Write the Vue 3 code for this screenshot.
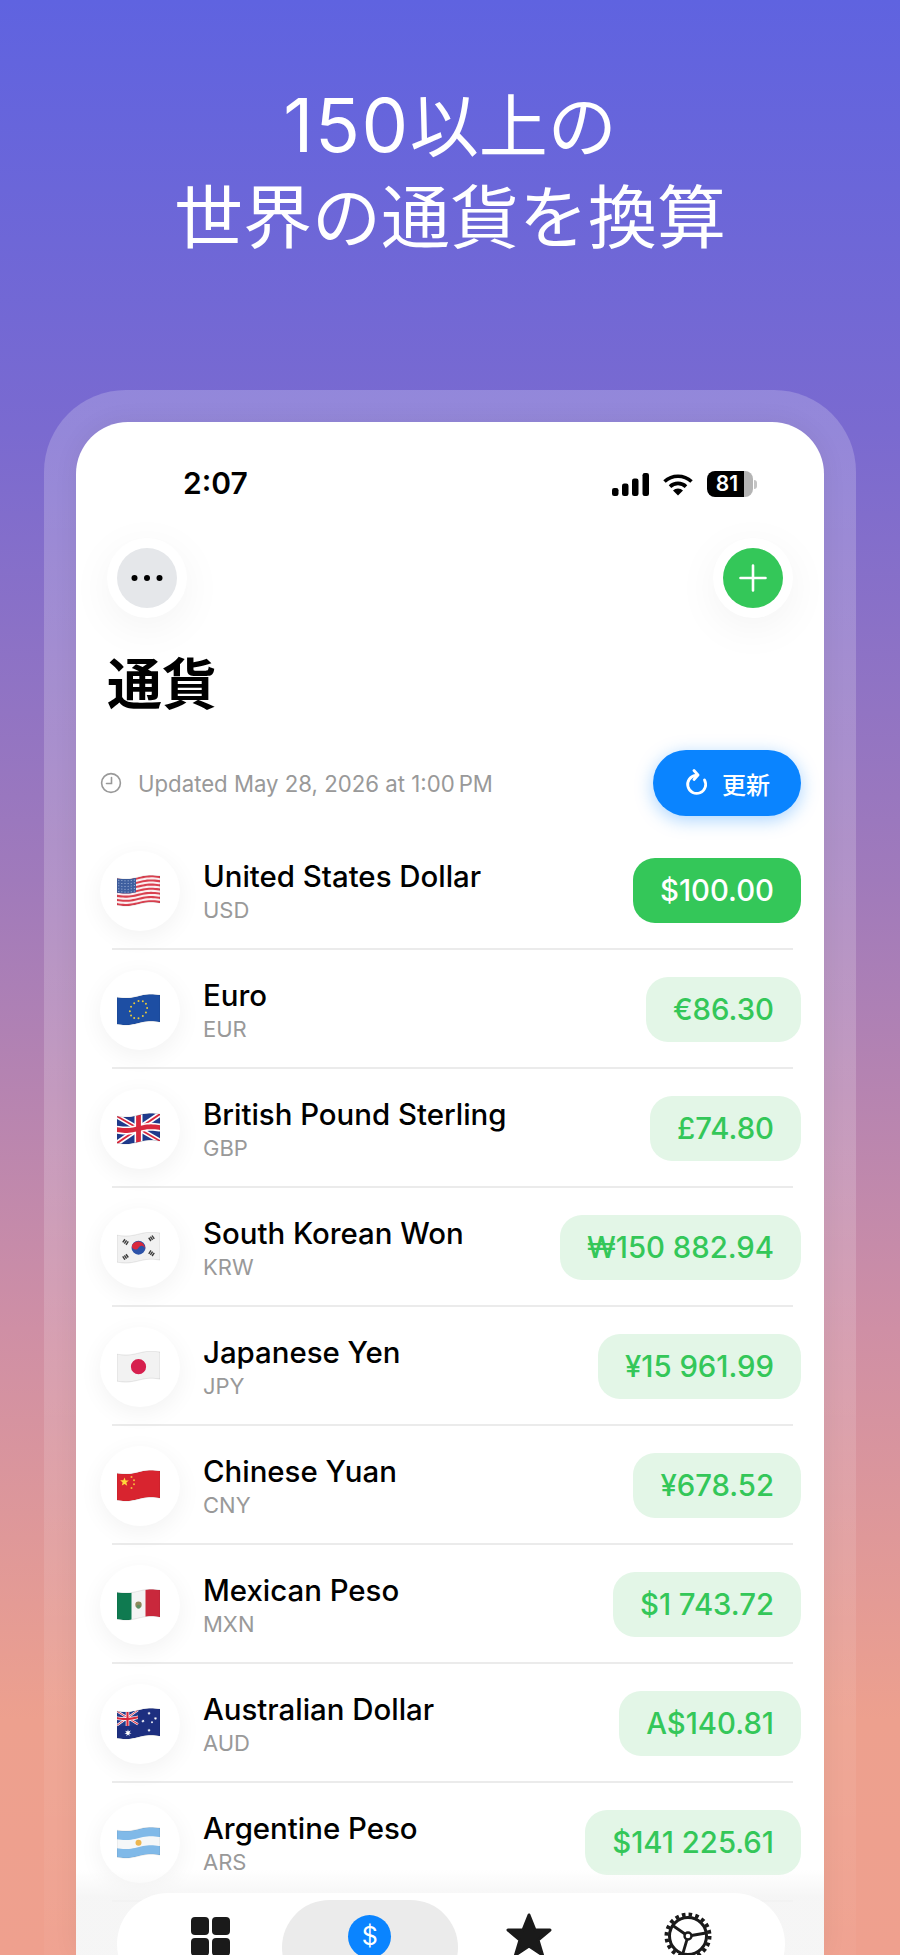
<template>
  <div class="page">
    <h2 class="headline"><span class="num">150</span>以上の<br />世界の通貨を換算</h2>

    <div class="bezel">
      <div class="screen">
        <div class="status">
          <span class="time">2:07</span>
          <div class="status-icons">
            <svg width="37" height="23" viewBox="0 0 37 23" fill="#000">
              <rect x="0" y="15" width="6.5" height="8" rx="2.2" />
              <rect x="10" y="10.5" width="6.5" height="12.5" rx="2.2" />
              <rect x="20" y="5.5" width="6.5" height="17.5" rx="2.2" />
              <rect x="30.5" y="0" width="6.5" height="23" rx="2.2" />
            </svg>
            <svg width="32" height="23" viewBox="0 0 32 23" fill="none" stroke="#000" stroke-width="3.6">
              <path d="M2.5 8.5A20 20 0 0 1 29.5 8.5" />
              <path d="M8 13.6A11.5 11.5 0 0 1 24 13.6" />
              <path d="M16 22.5L11 17.5A7 7 0 0 1 21 17.5Z" fill="#000" stroke="none" />
            </svg>
            <div class="battery">
              <div class="battery-body">81</div>
              <div class="battery-nub"></div>
            </div>
          </div>
        </div>

        <div class="nav">
          <div class="round-btn">
            <div class="round-inner grey">
              <svg width="34" height="8" viewBox="0 0 34 8" fill="#000">
                <circle cx="4.5" cy="4" r="3" />
                <circle cx="17" cy="4" r="3" />
                <circle cx="29.5" cy="4" r="3" />
              </svg>
            </div>
          </div>
          <div class="round-btn">
            <div class="round-inner green">
              <svg width="28" height="28" viewBox="0 0 28 28" stroke="#fff" stroke-width="2.6" stroke-linecap="round">
                <path d="M14 1.5V26.5M1.5 14H26.5" />
              </svg>
            </div>
          </div>
        </div>

        <h1 class="title">通貨</h1>

        <div class="updated">
          <div class="updated-text">
            <svg width="22" height="22" viewBox="0 0 22 22" fill="none" stroke="#999" stroke-width="1.6" stroke-linecap="round">
              <circle cx="11" cy="11" r="9.4" />
              <path d="M11.5 5.5V11.5H6.5" />
            </svg>
            <span>Updated May 28, 2026 at 1:00&#8201;PM</span>
          </div>
          <button class="refresh">
            <svg width="26" height="28" viewBox="0 0 26 28" fill="none" stroke="#fff" stroke-width="2.8" stroke-linecap="round" stroke-linejoin="round">
              <path d="M11.5 6.5A9 9 0 1 0 20.5 11" />
              <path d="M10 1.5L14 6L10 10.5" />
            </svg>
            <span>更新</span>
          </button>
        </div>

        <div class="list">
          <template v-for="(c, i) in currencies" :key="c.code">
            <div class="row">
              <div class="avatar">
                <svg class="flag" width="43" height="32" viewBox="0 0 43 32">
                  <defs>
                    <clipPath :id="'flag-' + c.code"><path :d="outline" /></clipPath>
                  </defs>
                  <g :clip-path="`url(#flag-${c.code})`">
                    <path v-for="(s, k) in c.shapes" :key="k" :d="s.d" :fill="s.fill" />
                  </g>
                  <path :d="outline" fill="none" stroke="rgba(0,0,0,.18)" stroke-width=".5" />
                </svg>
              </div>
              <div class="names">
                <div class="name">{{ c.name }}</div>
                <div class="code">{{ c.code }}</div>
              </div>
              <div class="amount" :class="{ base: i === 0 }">{{ c.amount }}</div>
            </div>
            <div class="sep"></div>
          </template>
        </div>

        <div class="fade"></div>

        <div class="tabbar">
          <div class="tab">
            <div class="grid-icon"><i></i><i></i><i></i><i></i></div>
          </div>
          <div class="tab active">
            <div class="dollar">$</div>
          </div>
          <div class="tab">
            <svg class="star" width="48" height="46" viewBox="0 0 48 46">
              <path
                d="M24 3L30 18H45L33 28L37.5 43L24 34L10.5 43L15 28L3 18H18Z"
                fill="#1a1a1a"
                stroke="#1a1a1a"
                stroke-width="3"
                stroke-linejoin="round"
              />
            </svg>
          </div>
          <div class="tab">
            <svg class="gear" width="48" height="48" viewBox="0 0 48 48" fill="none" stroke="#1a1a1a">
              <circle cx="24" cy="24" r="21.5" stroke-width="4" stroke-dasharray="3.6 3.15" />
              <circle cx="24" cy="24" r="18.5" stroke-width="3" />
              <circle cx="24" cy="24" r="3.5" stroke-width="2.4" />
              <path d="M21 22L8 13M27.4 23.5L42 21M23 27.5L19 41" stroke-width="2.8" />
            </svg>
          </div>
        </div>
      </div>
    </div>
  </div>
</template>

<script setup>
// flags are drawn flat and bent along the same wave as the emoji ones
const W = 43
const H = 27
const bend = (x) => -0.05 * x + 1.3 * Math.sin((x / W) * 2 * Math.PI) + 3.2

const pt = (x, y) => `${x.toFixed(2)} ${(y + bend(x)).toFixed(2)}`

function rect(x0, y0, x1, y1) {
  const xs = []
  for (let x = x0; x < x1; x += 2) xs.push(x)
  xs.push(x1)
  const top = xs.map((x) => pt(x, y0))
  const bottom = xs.reverse().map((x) => pt(x, y1))
  return 'M' + top.concat(bottom).join('L') + 'Z'
}

const poly = (pts) => 'M' + pts.map(([x, y]) => pt(x, y)).join('L') + 'Z'

function dot(cx, cy, r) {
  const y = cy + bend(cx)
  return `M${cx - r} ${y}a${r} ${r} 0 1 0 ${r * 2} 0a${r} ${r} 0 1 0 ${-r * 2} 0Z`
}

function star(cx, cy, r, n = 5) {
  const pts = []
  for (let i = 0; i < n * 2; i++) {
    const a = -Math.PI / 2 + (i * Math.PI) / n
    const q = i % 2 ? r * 0.42 : r
    pts.push([cx + q * Math.cos(a), cy + q * Math.sin(a)])
  }
  return poly(pts)
}

function line(x0, y0, x1, y1, w) {
  const len = Math.hypot(x1 - x0, y1 - y0)
  const nx = (-(y1 - y0) / len) * (w / 2)
  const ny = ((x1 - x0) / len) * (w / 2)
  return poly([
    [x0 + nx, y0 + ny],
    [x1 + nx, y1 + ny],
    [x1 - nx, y1 - ny],
    [x0 - nx, y0 - ny]
  ])
}

function union(x1, y1, k = 1) {
  const cx = x1 / 2
  const cy = y1 / 2
  return [
    { d: rect(0, 0, x1, y1), fill: '#1f3a8c' },
    { d: line(0, 0, x1, y1, 5 * k), fill: '#fff' },
    { d: line(x1, 0, 0, y1, 5 * k), fill: '#fff' },
    { d: line(0, 0, x1, y1, 1.8 * k), fill: '#d8283c' },
    { d: line(x1, 0, 0, y1, 1.8 * k), fill: '#d8283c' },
    { d: rect(cx - 4 * k, 0, cx + 4 * k, y1), fill: '#fff' },
    { d: rect(0, cy - 4 * k, x1, cy + 4 * k), fill: '#fff' },
    { d: rect(cx - 2.4 * k, 0, cx + 2.4 * k, y1), fill: '#d8283c' },
    { d: rect(0, cy - 2.4 * k, x1, cy + 2.4 * k), fill: '#d8283c' }
  ]
}

function usFlag() {
  const out = [{ d: rect(0, 0, W, H), fill: '#fbeef0' }]
  for (let i = 0; i < 13; i += 2) {
    out.push({ d: rect(0, (i * H) / 13, W, ((i + 1) * H) / 13), fill: '#d9404f' })
  }
  out.push({ d: rect(0, 0, 19, 14.5), fill: '#3f5f9f' })
  for (let r = 0; r < 5; r++) {
    for (let c = 0; c < 6; c++) {
      out.push({ d: dot(1.8 + c * 3.1, 1.8 + r * 2.8, 0.5), fill: '#c9d6ee' })
    }
  }
  return out
}

function euFlag() {
  const out = [{ d: rect(0, 0, W, H), fill: '#1d4ea3' }]
  for (let i = 0; i < 12; i++) {
    const a = (i * Math.PI) / 6
    out.push({ d: dot(21.5 + 8.6 * Math.cos(a), 13.5 + 8.6 * Math.sin(a), 1), fill: '#e8c93a' })
  }
  return out
}

function krFlag() {
  const y = 13.5 + bend(21.5)
  const out = [
    { d: rect(0, 0, W, H), fill: '#f1f1f1' },
    { d: dot(21.5, 13.5, 7), fill: '#2c52a8' },
    { d: `M15 ${y - 2.4}A7 7 0 0 1 28 ${y + 2.4}A3.5 3.5 0 0 0 21.5 ${y}A3.5 3.5 0 0 1 15 ${y - 2.4}Z`, fill: '#d8283c' }
  ]
  const corners = [
    [8.5, 6, 1],
    [34.5, 6, -1],
    [8.5, 21, -1],
    [34.5, 21, 1]
  ]
  corners.forEach(([cx, cy, s]) => {
    for (let k = -1; k <= 1; k++) {
      const ox = k * 2 * 0.83
      const oy = k * 2 * 0.55 * s
      out.push({
        d: line(cx + ox - 2 * 0.55 * s, cy + oy + 2 * 0.83, cx + ox + 2 * 0.55 * s, cy + oy - 2 * 0.83, 1.4),
        fill: '#3a3a3a'
      })
    }
  })
  return out
}

const jpFlag = () => [
  { d: rect(0, 0, W, H), fill: '#f2f2f2' },
  { d: dot(21.5, 13.5, 7.6), fill: '#d6204e' }
]

const cnFlag = () => [
  { d: rect(0, 0, W, H), fill: '#d8242f' },
  { d: star(7.5, 8, 4.6), fill: '#ffd83a' },
  { d: dot(14.5, 3.5, 1), fill: '#f6b73c' },
  { d: dot(17, 7, 1), fill: '#f6b73c' },
  { d: dot(17, 11, 1), fill: '#f6b73c' },
  { d: dot(14.5, 14.5, 1), fill: '#f6b73c' }
]

const mxFlag = () => [
  { d: rect(0, 0, W, H), fill: '#f4f4f4' },
  { d: rect(0, 0, 14.5, H), fill: '#0f7a50' },
  { d: rect(28.5, 0, W, H), fill: '#c9283c' },
  { d: dot(21.5, 13.5, 3.2), fill: '#8f8a5c' },
  { d: dot(21.5, 15.5, 2), fill: '#5e8f62' }
]

const auFlag = () => [
  { d: rect(0, 0, W, H), fill: '#1d2f80' },
  ...union(21, 14, 0.45),
  { d: star(11, 21, 3.6, 7), fill: '#fff' },
  { d: star(32, 5, 1.8, 7), fill: '#fff' },
  { d: star(26, 12, 1.8, 7), fill: '#fff' },
  { d: star(38.5, 10, 1.8, 7), fill: '#fff' },
  { d: star(32, 22, 1.8, 7), fill: '#fff' },
  { d: dot(35, 14, 0.9), fill: '#fff' }
]

const arFlag = () => [
  { d: rect(0, 0, W, H), fill: '#80b9e8' },
  { d: rect(0, 9, W, 18), fill: '#f5f7f8' },
  { d: dot(21.5, 13.5, 3), fill: '#edb64f' }
]

const outline = rect(0, 0, W, H)

const currencies = [
  { name: 'United States Dollar', code: 'USD', amount: '$100.00', shapes: usFlag() },
  { name: 'Euro', code: 'EUR', amount: '€86.30', shapes: euFlag() },
  { name: 'British Pound Sterling', code: 'GBP', amount: '£74.80', shapes: union(W, H) },
  { name: 'South Korean Won', code: 'KRW', amount: '₩150\u00a0882.94', shapes: krFlag() },
  { name: 'Japanese Yen', code: 'JPY', amount: '¥15\u00a0961.99', shapes: jpFlag() },
  { name: 'Chinese Yuan', code: 'CNY', amount: '¥678.52', shapes: cnFlag() },
  { name: 'Mexican Peso', code: 'MXN', amount: '$1\u00a0743.72', shapes: mxFlag() },
  { name: 'Australian Dollar', code: 'AUD', amount: 'A$140.81', shapes: auFlag() },
  { name: 'Argentine Peso', code: 'ARS', amount: '$141\u00a0225.61', shapes: arFlag() }
]
</script>

<style>
body {
  margin: 0;
}
</style>

<style scoped>
.page {
  width: 900px;
  height: 1955px;
  overflow: hidden;
  display: flex;
  flex-direction: column;
  background: linear-gradient(180deg, #5f63e0 0%, #7a6ad0 22%, #a07abb 45%, #cf8fa5 68%, #eda08e 88%, #efa08e 100%);
  font-family: Inter, "Noto Sans CJK JP", sans-serif;
}

.headline {
  margin: 0;
  padding-top: 82px;
  height: 390px;
  box-sizing: border-box;
  font-size: 69px;
  font-weight: 400;
  line-height: 91px;
  text-align: center;
  color: #fff;
}

.num {
  font-size: 74px;
  line-height: 1;
  letter-spacing: 1.5px;
}

.bezel {
  flex: 1;
  margin: 0 44px;
  padding: 32px 32px 0;
  border-radius: 82px 82px 0 0;
  background: linear-gradient(180deg, rgba(255, 255, 255, 0.2) 0%, rgba(255, 255, 255, 0.18) 50%, rgba(255, 255, 255, 0.03) 100%);
  display: flex;
}

.screen {
  flex: 1;
  position: relative;
  overflow: hidden;
  background: #fff;
  border-radius: 52px 52px 0 0;
  box-shadow: 0 0 26px rgba(0, 0, 0, 0.06);
}

.status {
  height: 116px;
  box-sizing: border-box;
  padding: 0 67px 0 107px;
  display: flex;
  align-items: flex-start;
  justify-content: space-between;
}

.time {
  margin-top: 42px;
  font-size: 30px;
  line-height: 38px;
  font-weight: 600;
  color: #000;
}

.status-icons {
  margin-top: 49px;
  display: flex;
  align-items: center;
  gap: 13px;
}

.battery {
  display: flex;
  align-items: center;
  gap: 1px;
}

.battery-body {
  width: 46px;
  height: 26px;
  border-radius: 8px;
  background: linear-gradient(90deg, #000 0 81%, #b4b4b4 81% 100%);
  color: #fff;
  font-size: 21px;
  font-weight: 600;
  line-height: 26px;
  text-align: center;
  padding-right: 6px;
  box-sizing: border-box;
}

.battery-nub {
  width: 3px;
  height: 9px;
  border-radius: 0 3px 3px 0;
  background: #c4c4c4;
}

.nav {
  display: flex;
  justify-content: space-between;
  padding: 0 31px;
}

.round-btn {
  width: 80px;
  height: 80px;
  border-radius: 50%;
  background: #fff;
  box-shadow: 0 10px 44px rgba(0, 0, 0, 0.05);
  display: flex;
  align-items: center;
  justify-content: center;
}

.round-inner {
  width: 60px;
  height: 60px;
  border-radius: 50%;
  display: flex;
  align-items: center;
  justify-content: center;
}

.round-inner.grey {
  background: #e5e7ea;
}

.round-inner.green {
  background: #34c759;
}

.title {
  margin: 30px 0 0;
  padding-left: 31px;
  font-family: "Noto Sans CJK JP", sans-serif;
  font-size: 55px;
  font-weight: 700;
  line-height: 64px;
  color: #000;
}

.updated {
  margin-top: 38px;
  padding: 0 23px 0 24px;
  display: flex;
  align-items: center;
  justify-content: space-between;
}

.updated-text {
  display: flex;
  align-items: center;
  gap: 16px;
  font-size: 22.2px;
  color: #999;
}

.refresh {
  width: 148px;
  height: 66px;
  border: none;
  border-radius: 33px;
  background: #0a84ff;
  box-shadow: 0 4px 18px rgba(10, 132, 255, 0.35);
  color: #fff;
  font-family: "Noto Sans CJK JP", sans-serif;
  font-size: 24px;
  font-weight: 500;
  display: flex;
  align-items: center;
  justify-content: center;
  gap: 12px;
  padding: 0;
}

.list {
  margin-top: 15px;
}

.row {
  height: 117px;
  box-sizing: border-box;
  padding: 2px 23px 0 24px;
  display: flex;
  align-items: center;
}

.sep {
  height: 2px;
  margin: 0 31px 0 36px;
  background: #ebebeb;
}

.avatar {
  width: 80px;
  height: 80px;
  flex: none;
  border-radius: 50%;
  background: #fff;
  box-shadow: 0 6px 24px rgba(0, 0, 0, 0.055);
  display: flex;
  align-items: center;
  justify-content: center;
  padding-right: 3px;
  box-sizing: border-box;
}

.names {
  margin-left: 23px;
  flex: 1;
}

.name {
  font-size: 29.4px;
  line-height: 35px;
  font-weight: 500;
  color: #000;
}

.code {
  margin-top: 3px;
  font-size: 22px;
  line-height: 26px;
  color: #999;
}

.amount {
  height: 65px;
  box-sizing: border-box;
  padding: 0 27px;
  border-radius: 22px;
  background: #e3f6e7;
  color: #34c759;
  font-size: 29.3px;
  font-weight: 500;
  line-height: 65px;
}

.amount.base {
  background: #34c759;
  color: #fff;
}

.fade {
  position: absolute;
  left: 0;
  right: 0;
  bottom: 0;
  height: 85px;
  background: linear-gradient(180deg, rgba(244, 244, 244, 0), rgba(244, 244, 244, 0.85) 32%);
}

.tabbar {
  position: absolute;
  left: 41px;
  right: 39px;
  bottom: -40px;
  height: 102px;
  box-sizing: border-box;
  padding: 7px 17px 0 14px;
  border-radius: 52px;
  background: #fff;
  display: grid;
  grid-template-columns: repeat(4, 1fr);
}

.tab {
  display: flex;
  justify-content: center;
  padding-top: 16px;
}

.tab.active {
  margin: 0 -8px;
  padding-top: 15px;
  border-radius: 50px;
  background: #ebebeb;
}

.grid-icon {
  display: grid;
  grid-template-columns: 18px 18px;
  grid-auto-rows: 18px;
  gap: 3px;
  margin-top: 1px;
}

.grid-icon i {
  border-radius: 4px;
  background: #1a1a1a;
}

.dollar {
  width: 43px;
  height: 43px;
  border-radius: 50%;
  background: #0a84ff;
  color: #fff;
  font-size: 25px;
  line-height: 43px;
  text-align: center;
}

.star,
.gear {
  margin-top: -4px;
}
</style>
